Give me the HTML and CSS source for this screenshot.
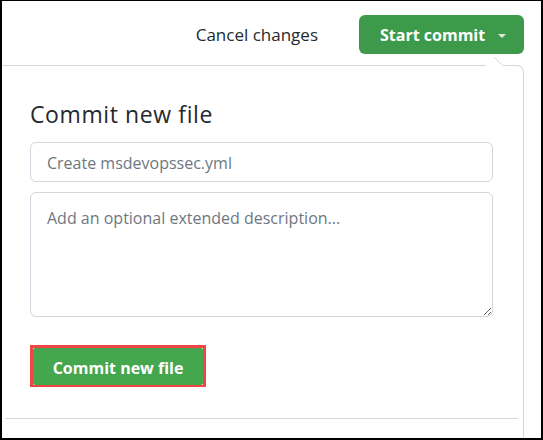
FILE: index.html
```
<!DOCTYPE html>
<html lang="en">
<head>
<meta charset="utf-8">
<title>Commit new file</title>
<link rel="stylesheet" href="styles.css">
</head>
<body>
<div class="frame">
  <div class="topbar">
    <a class="cancel-link" href="#">Cancel changes</a>
    <button class="btn-start" type="button">
      <span>Start commit</span>
      <span class="dropdown-caret"></span>
    </button>
  </div>
  <div class="popover">
    <svg class="popover-caret" width="24" height="10" viewBox="0 0 24 10" aria-hidden="true">
      <rect x="0" y="8" width="17" height="2" fill="#fff"></rect>
      <line x1="8.5" y1="0.5" x2="16.5" y2="8.5" stroke="#d0d7de" stroke-width="1"></line>
    </svg>
    <div class="popover-body">
      <h2 class="commit-title">Commit new file</h2>
      <input class="field field-summary" type="text" placeholder="Create msdevopssec.yml">
      <textarea class="field field-desc" placeholder="Add an optional extended description..."></textarea>
      <div class="actions">
        <span class="highlight">
          <button class="btn-commit" type="button">Commit new file</button>
        </span>
      </div>
      <div class="separator"></div>
    </div>
  </div>
</div>
</body>
</html>
```
FILE: styles.css
```
html, body {
  margin: 0;
  padding: 0;
  background: #fff;
}

.frame {
  width: 543px;
  height: 440px;
  box-sizing: border-box;
  border-style: solid;
  border-color: #000;
  border-width: 1px 2px 2px 2px;
  overflow: hidden;
  background: #fff;
  display: flex;
  flex-direction: column;
  font-family: "Open Sans", "Noto Sans", sans-serif;
  color: #24292f;
}

.topbar {
  display: flex;
  justify-content: flex-end;
  align-items: center;
  padding: 14px 17px 0 0;
}

.cancel-link {
  color: #24292f;
  text-decoration: none;
  font-size: 17px;
  font-weight: 500;
  margin-right: 41px;
}

.btn-start {
  display: flex;
  align-items: center;
  gap: 13px;
  width: 165px;
  height: 39px;
  box-sizing: border-box;
  padding: 0 0 0 21px;
  border: 0;
  border-radius: 6px;
  background: #3e9a4b;
  color: #fff;
  font-family: inherit;
  font-size: 16px;
  font-weight: 700;
}

.dropdown-caret {
  width: 0;
  height: 0;
  border-left: 4px solid transparent;
  border-right: 4px solid transparent;
  border-top: 4px solid rgba(255, 255, 255, 0.8);
  margin-top: 2px;
}

.popover {
  position: relative;
  flex: 1;
  margin: 11px 17px 0 -10px;
  border-style: solid;
  border-color: #d0d7de;
  border-width: 1px 1px 0 0;
  border-top-right-radius: 7px;
}

.popover-caret {
  position: absolute;
  top: -9px;
  right: 13px;
}

.popover-body {
  padding: 0 30px 0 38px;
  display: flex;
  flex-direction: column;
}

.commit-title {
  margin: 33px 0 13px 0;
  font-size: 23px;
  line-height: 30px;
  font-weight: 400;
  letter-spacing: 0.6px;
  color: #24292f;
}

.field {
  display: block;
  box-sizing: border-box;
  width: 100%;
  border: 1px solid #d0d7de;
  border-radius: 6px;
  background: #fff;
  font-family: inherit;
  font-size: 16px;
  color: #24292f;
  outline: none;
  margin: 0;
}

.field::placeholder {
  color: #6e7781;
  opacity: 1;
}

.field-summary {
  height: 40px;
  padding: 2px 16px 0;
}

.field-desc {
  height: 125px;
  margin-top: 10px;
  padding: 13px 16px 9px;
  line-height: 24px;
  resize: vertical;
}

.actions {
  display: flex;
  padding: 28px 0 0 0;
}

.highlight {
  display: flex;
  border: 3px solid #f04545;
  border-bottom-width: 2px;
}

.btn-commit {
  width: 170px;
  height: 37px;
  border: 0;
  border-radius: 2px;
  padding: 2px 0 0;
  background: #44a64e;
  color: #fff;
  font-family: inherit;
  font-size: 16px;
  font-weight: 700;
}

.separator {
  margin: 31px -25px 0 -25px;
  border-top: 1px solid #d5d8dc;
}
```
